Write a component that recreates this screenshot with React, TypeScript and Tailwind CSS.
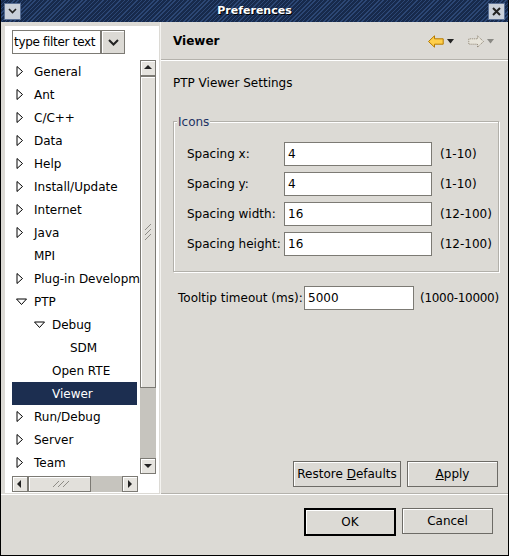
import React from 'react';

type TreeItem = {
  label: string;
  level: number;
  toggle?: 'closed' | 'open';
  selected?: boolean;
};

const treeItems: TreeItem[] = [
  { label: 'General', level: 0, toggle: 'closed' },
  { label: 'Ant', level: 0, toggle: 'closed' },
  { label: 'C/C++', level: 0, toggle: 'closed' },
  { label: 'Data', level: 0, toggle: 'closed' },
  { label: 'Help', level: 0, toggle: 'closed' },
  { label: 'Install/Update', level: 0, toggle: 'closed' },
  { label: 'Internet', level: 0, toggle: 'closed' },
  { label: 'Java', level: 0, toggle: 'closed' },
  { label: 'MPI', level: 0 },
  { label: 'Plug-in Developm', level: 0, toggle: 'closed' },
  { label: 'PTP', level: 0, toggle: 'open' },
  { label: 'Debug', level: 1, toggle: 'open' },
  { label: 'SDM', level: 2 },
  { label: 'Open RTE', level: 1 },
  { label: 'Viewer', level: 1, selected: true },
  { label: 'Run/Debug', level: 0, toggle: 'closed' },
  { label: 'Server', level: 0, toggle: 'closed' },
  { label: 'Team', level: 0, toggle: 'closed' },
];

const fields = [
  { label: 'Spacing x:', value: '4', range: '(1-10)' },
  { label: 'Spacing y:', value: '4', range: '(1-10)' },
  { label: 'Spacing width:', value: '16', range: '(12-100)' },
  { label: 'Spacing height:', value: '16', range: '(12-100)' },
];

const Toggle: React.FC<{ kind?: 'closed' | 'open'; selected?: boolean }> = ({ kind, selected }) => {
  if (!kind) return <span className="inline-block w-[22px] shrink-0" />;
  const stroke = selected ? '#fff' : '#000';
  return (
    <span className="inline-flex w-[22px] shrink-0 items-center justify-start pl-[4px]">
      {kind === 'closed' ? (
        <svg width="8" height="11" viewBox="0 0 8 11">
          <polygon points="1,0.5 6.5,5.5 1,10.5" fill="#fff" stroke={stroke} strokeWidth="1" />
        </svg>
      ) : (
        <svg width="11" height="8" viewBox="0 0 11 8">
          <polygon points="0.5,1 10.5,1 5.5,6.5" fill="#fff" stroke={stroke} strokeWidth="1" />
        </svg>
      )}
    </span>
  );
};

const Grip: React.FC<{ vertical?: boolean }> = ({ vertical }) => (
  <svg width={vertical ? 8 : 18} height={vertical ? 18 : 8} viewBox={vertical ? '0 0 8 18' : '0 0 18 8'}>
    {vertical ? (
      <g stroke="#8e8c86" strokeWidth="1">
        <line x1="1" y1="7" x2="7" y2="1" />
        <line x1="1" y1="12" x2="7" y2="6" />
        <line x1="1" y1="17" x2="7" y2="11" />
      </g>
    ) : (
      <g stroke="#8e8c86" strokeWidth="1">
        <line x1="2" y1="7" x2="8" y2="1" />
        <line x1="7" y1="7" x2="13" y2="1" />
        <line x1="12" y1="7" x2="18" y2="1" />
      </g>
    )}
  </svg>
);

const Arrow: React.FC<{ dir: 'up' | 'down' | 'left' | 'right' }> = ({ dir }) => {
  const pts = {
    up: '1,6 5,2 9,6',
    down: '1,3 5,7 9,3',
    left: '6,1 2,5 6,9',
    right: '3,1 7,5 3,9',
  }[dir];
  return (
    <svg width="10" height="10" viewBox="0 0 10 10">
      <polygon points={pts} fill="#222" />
    </svg>
  );
};

const ScrollButton: React.FC<{ dir: 'up' | 'down' | 'left' | 'right' }> = ({ dir }) => (
  <div className="flex h-[16px] w-[16px] shrink-0 items-center justify-center border border-[#7c7a74] bg-[#e6e4df] shadow-[inset_1px_1px_0_#fff]">
    <Arrow dir={dir} />
  </div>
);

const Button: React.FC<{ children: React.ReactNode; width: string; isDefault?: boolean }> = ({ children, width, isDefault }) => (
  <div
    className={`flex shrink-0 items-center justify-center bg-[#dcdad5] text-[12px] text-black shadow-[inset_1px_1px_0_#fff] ${width} ${
      isDefault ? 'h-[28px] border-2 border-black' : 'h-[26px] border border-[#6d6b66]'
    }`}
  >
    {children}
  </div>
);

export default function App() {
  return (
    <div
      className="flex h-[556px] w-[509px] flex-col overflow-hidden border-x border-b border-black bg-[#dcdad5] text-[12px] text-black"
      style={{ fontFamily: '"DejaVu Sans", Verdana, sans-serif' }}
    >
      {/* title bar */}
      <div className="flex h-[22px] shrink-0 items-center justify-between bg-[repeating-linear-gradient(135deg,#2c4775_0px,#2c4775_1px,#172a4c_1px,#172a4c_3px)] px-[3px]">
        <div className="flex h-[17px] w-[17px] items-center justify-center border border-[#5a6f94] bg-[#c9cfd9]">
          <svg width="9" height="6" viewBox="0 0 9 6">
            <polyline points="1,1 4.5,4.5 8,1" fill="none" stroke="#222" strokeWidth="1.6" />
          </svg>
        </div>
        <div className="text-[11px] font-bold text-white [text-shadow:1px_1px_0_#000]">Preferences</div>
        <div className="flex h-[17px] w-[17px] items-center justify-center border border-[#5a6f94] bg-[#c9cfd9]">
          <svg width="9" height="9" viewBox="0 0 9 9">
            <path d="M1 1L8 8M8 1L1 8" stroke="#222" strokeWidth="2" />
          </svg>
        </div>
      </div>

      <div className="flex h-[472px] shrink-0">
        {/* left: tree */}
        <div className="w-[159px] shrink-0 pl-[4px] pt-[4px]">
          <div className="flex h-[467px] w-[154px] flex-col bg-white pl-[7px] pt-[4px]">
            <div className="flex h-[24px] w-[113px]">
              <div className="flex h-[24px] w-[89px] items-center overflow-hidden whitespace-nowrap border border-[#7c7a74] pl-[1px] text-[12px] tracking-[-0.3px]">
                type filter text
              </div>
              <div className="flex h-[24px] w-[24px] items-center justify-center border border-[#7c7a74] bg-[#dcdad5] shadow-[inset_1px_1px_0_#fff]">
                <svg width="11" height="7" viewBox="0 0 11 7">
                  <polyline points="1,1 5.5,5.5 10,1" fill="none" stroke="#222" strokeWidth="2" />
                </svg>
              </div>
            </div>
            <div className="mt-[6px] flex h-[414px]">
              <div className="w-[128px] overflow-hidden">
                {treeItems.map((item) => (
                  <div
                    key={item.label}
                    className={`flex h-[23px] items-center whitespace-nowrap text-[12px] ${
                      item.selected ? 'w-[125px] bg-[#1c2e50] text-white' : 'text-black'
                    }`}
                    style={{ paddingLeft: item.level * 18 }}
                  >
                    <Toggle kind={item.toggle} selected={item.selected} />
                    <span>{item.label}</span>
                  </div>
                ))}
              </div>
              <div className="flex w-[16px] flex-col">
                <ScrollButton dir="up" />
                <div className="flex h-[312px] items-center justify-center border border-[#7c7a74] bg-[#e2e0db] shadow-[inset_1px_1px_0_#fff]">
                  <Grip vertical />
                </div>
                <div className="flex-1 bg-[#c6c4be]" />
                <ScrollButton dir="down" />
              </div>
            </div>
            <div className="mt-[2px] flex h-[16px] w-[126px]">
              <ScrollButton dir="left" />
              <div className="flex w-[63px] items-center justify-center border border-[#7c7a74] bg-[#e2e0db] shadow-[inset_1px_1px_0_#fff]">
                <Grip />
              </div>
              <div className="flex-1 bg-[#c6c4be]" />
              <ScrollButton dir="right" />
            </div>
          </div>
        </div>

        {/* right: page */}
        <div className="flex min-w-0 flex-1 flex-col overflow-hidden border-l border-[#f4f3f0]">
          <div className="flex h-[38px] shrink-0 items-center justify-between border-b border-[#b4b2ac] pl-[12px] pr-[14px]">
            <div className="text-[12px] font-bold">Viewer</div>
            <div className="flex items-center gap-[3px] pt-[2px]">
              <svg width="16" height="13" viewBox="0 0 16 13">
                <path d="M0.5 6.5L6.5 0.8V3.8H15.2V9.2H6.5V12.2Z" fill="#ffcf4a" stroke="#b57a00" strokeWidth="1" />
              </svg>
              <svg width="7" height="5" viewBox="0 0 7 5">
                <polygon points="0,0 7,0 3.5,4.5" fill="#222" />
              </svg>
              <span className="w-[8px]" />
              <svg width="16" height="13" viewBox="0 0 16 13">
                <path d="M15.5 6.5L9.5 0.8V3.8H0.8V9.2H9.5V12.2Z" fill="#e7e4da" stroke="#8b8170" strokeWidth="1" strokeDasharray="1 1" />
              </svg>
              <svg width="7" height="5" viewBox="0 0 7 5">
                <polygon points="0,0 7,0 3.5,4.5" fill="#8a8984" />
              </svg>
            </div>
          </div>
          <div className="h-px shrink-0 bg-white" />

          <div className="flex min-w-0 flex-1 flex-col pl-[12px] pr-[10px]">
            <div className="mt-[13px] text-[12px]">PTP Viewer Settings</div>

            {/* Icons group */}
            <div className="relative mt-[29px] w-[326px] border border-[#b2b0aa] pb-[15px] pl-[13px] pr-[4px] pt-[20px] shadow-[1px_1px_0_#fff,inset_1px_1px_0_#fff]">
              <span className="absolute -top-[9px] left-[3px] bg-[#dcdad5] px-[1px] text-[12px] text-[#1c3263]">Icons</span>
              <div className="flex flex-col gap-[6px]">
                {fields.map((f) => (
                  <div key={f.label} className="flex items-center whitespace-nowrap">
                    <span className="w-[97px] text-[12px]">{f.label}</span>
                    <div className="flex h-[24px] w-[148px] items-center border border-[#7c7a74] bg-white pl-[3px] text-[12px]">{f.value}</div>
                    <span className="ml-[8px] text-[12px]">{f.range}</span>
                  </div>
                ))}
              </div>
            </div>

            <div className="ml-[5px] mt-[14px] flex items-center whitespace-nowrap">
              <span className="w-[126px] shrink-0 text-[12px]">Tooltip timeout (ms):</span>
              <div className="flex h-[24px] w-[110px] shrink-0 items-center border border-[#7c7a74] bg-white pl-[3px] text-[12px]">5000</div>
              <span className="ml-[6px] text-[12px] tracking-[-0.3px]">(1000-10000)</span>
            </div>

            <div className="flex-1" />
            <div className="flex justify-end gap-[6px] pr-[0px]">
              <Button width="w-[108px]">
                <span>
                  Restore <span className="underline">D</span>efaults
                </span>
              </Button>
              <Button width="w-[91px]">
                <span>
                  <span className="underline">A</span>pply
                </span>
              </Button>
            </div>
          </div>
          <div className="mt-[6px] h-px shrink-0 bg-[#b4b2ac]" />
        </div>
      </div>
      <div className="h-px shrink-0 bg-white" />

      {/* bottom button bar */}
      <div className="flex flex-1 items-start justify-end gap-[6px] pr-[15px] pt-[13px]">
        <Button width="w-[92px]" isDefault>
          OK
        </Button>
        <Button width="w-[91px]">Cancel</Button>
      </div>
    </div>
  );
}
